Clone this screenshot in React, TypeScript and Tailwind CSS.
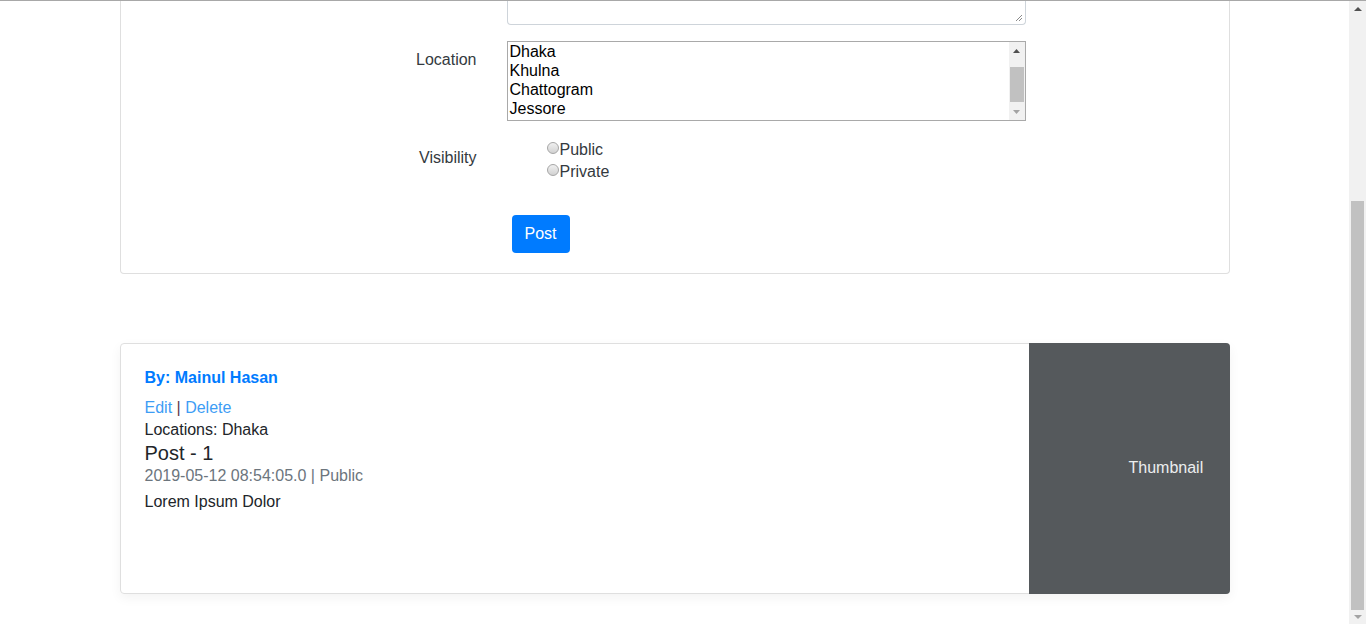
import React from 'react';

const locations = ['Dhaka', 'Khulna', 'Chattogram', 'Jessore'];

const Radio = ({ label }: { label: string }) => (
  <label className="flex items-center leading-[22px]">
    <span className="mb-[4px] h-[12px] w-[12px] rounded-full border border-[#a6a6a6] bg-gradient-to-b from-[#f0f0f0] to-[#d2d2d2]" />
    <span className="ml-px">{label}</span>
  </label>
);

const App = () => {
  return (
    <div className="flex h-[624px] overflow-hidden border-t border-[#a8a8a8] bg-white font-['Liberation_Sans',Arial,sans-serif] text-[16px] text-[#212529]">
      <div className="flex-1">
        <div className="mx-auto max-w-[1140px] px-[15px]">
          {/* Post form card (scrolled past the top) */}
          <div className="rounded-b-[4px] border-x border-b border-[#dfdfdf] px-5 pb-5">
            <div className="mb-4 flex gap-[30px]">
              <div className="w-[336px]" />
              <div className="relative h-[24px] w-[519px] rounded-b-[4px] border-x border-b border-[#ced4da]">
                <svg className="absolute bottom-[2px] right-[2px]" width="8" height="8" viewBox="0 0 8 8">
                  <path d="M1 7 L7 1 M4 7 L7 4" stroke="#8a8a8a" strokeWidth="1" />
                </svg>
              </div>
            </div>

            <div className="mb-[17px] flex gap-[30px]">
              <div className="w-[336px] pt-[7px] text-right leading-6 text-[#343a40]">Location</div>
              <div className="flex h-[80px] w-[519px] border border-[#a9a9a9] text-black">
                <div className="flex-1 pl-[2px]">
                  {locations.map((l) => (
                    <div key={l} className="leading-[19px]">{l}</div>
                  ))}
                </div>
                <div className="flex w-[16px] flex-col bg-[#f1f1f1]">
                  <div className="flex h-[17px] items-center justify-center">
                    <svg width="7" height="4" viewBox="0 0 7 4"><path d="M0 4 L3.5 0 L7 4 Z" fill="#505050" /></svg>
                  </div>
                  <div className="mx-[1px] mt-[8px] h-[35px] bg-[#c1c1c1]" />
                  <div className="flex-1" />
                  <div className="flex h-[17px] items-center justify-center">
                    <svg width="7" height="4" viewBox="0 0 7 4"><path d="M0 0 L3.5 4 L7 0 Z" fill="#a3a3a3" /></svg>
                  </div>
                </div>
              </div>
            </div>

            <div className="flex gap-[30px]">
              <div className="w-[336px] pt-2 text-right leading-6 text-[#343a40]">Visibility</div>
              <div className="w-[519px] pl-10 pt-px text-[#343a40]">
                <Radio label="Public" />
                <Radio label="Private" />
              </div>
            </div>

            <div className="mt-[32px] flex gap-[30px]">
              <div className="w-[336px]" />
              <button className="ml-[5px] h-[38px] rounded-[4px] bg-[#007bff] px-[13px] leading-6 text-white">Post</button>
            </div>
          </div>

          {/* Post card */}
          <div className="mt-[69px] flex h-[251px] rounded-[4px] border border-[#dfdfdf] shadow-[0_4px_12px_rgba(0,0,0,0.05)]">
            <div className="flex flex-1 flex-col items-start px-6 pb-6 pt-[25px]">
              <div className="mb-[10px] font-bold leading-[18px] text-[#007bff]">By: Mainul Hasan</div>
              <div className="leading-[22px]">
                <span className="text-[#3d9df5]">Edit</span>
                <span className="text-[#5c3a48]"> | </span>
                <span className="text-[#3d9df5]">Delete</span>
              </div>
              <div className="leading-[22px]">Locations: Dhaka</div>
              <div className="text-[20px] leading-6">Post - 1</div>
              <div className="leading-[22px] text-[#6c757d]">2019-05-12 08:54:05.0 | Public</div>
              <div className="mt-1 leading-[22px]">Lorem Ipsum Dolor</div>
            </div>
            <div className="-my-px -mr-px flex w-[201px] items-center rounded-r-[4px] bg-[#55595c] pl-[100px] text-[#eceeef]">
              <span className="-mt-[2px]">Thumbnail</span>
            </div>
          </div>
        </div>
      </div>

      {/* page scrollbar */}
      <div className="flex w-[17px] flex-col bg-[#f1f1f1]">
        <div className="flex h-[17px] items-center justify-center">
          <svg width="8" height="4" viewBox="0 0 8 4"><path d="M0 4 L4 0 L8 4 Z" fill="#505050" /></svg>
        </div>
        <div className="mx-[2px] mt-[183px] h-[410px] bg-[#c1c1c1]" />
        <div className="flex-1" />
        <div className="flex h-[14px] items-center justify-center">
          <svg width="8" height="4" viewBox="0 0 8 4"><path d="M0 0 L4 4 L8 0 Z" fill="#a3a3a3" /></svg>
        </div>
      </div>
    </div>
  );
};

export default App;
